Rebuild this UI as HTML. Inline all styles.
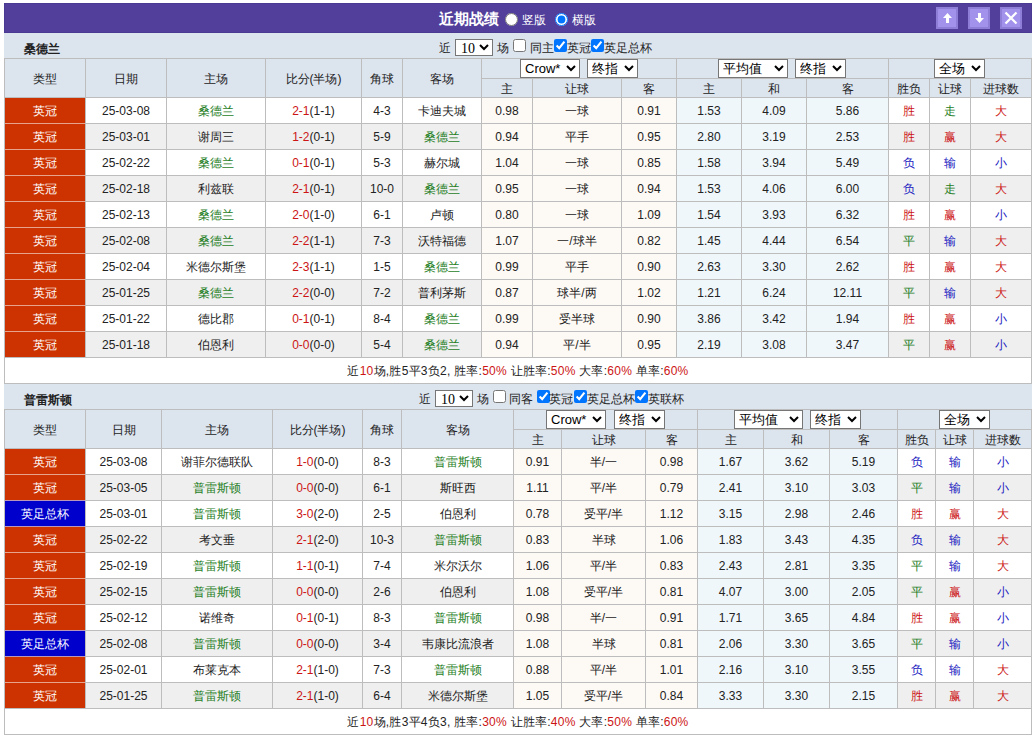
<!DOCTYPE html>
<html><head><meta charset="utf-8"><style>
html,body{margin:0;padding:0;background:#fff;}
body{width:1034px;height:736px;overflow:hidden;position:relative;font-family:"Liberation Sans",sans-serif;font-size:12px;color:#222;}
div,select,input{position:absolute;box-sizing:border-box;}
div{white-space:nowrap;}
select{font-family:"Liberation Sans",sans-serif;font-size:13px;padding:0 0 2px 0;margin:0;background:#fff;border:1px solid #767676;border-radius:0;color:#000;}
select.n{font-family:"Liberation Serif",serif;font-size:14px;padding:0 0 1px 1px;}
input{margin:0;width:13px;height:13px;}
</style></head><body>
<div style="left:4px;top:3px;width:1028px;height:30px;background:#523f9c;border:1px solid #4a3a92"></div><div style="left:439px;top:4px;height:30px;line-height:30px;color:#fff;font-weight:bold;font-size:15px;white-space:nowrap">近期战绩</div><input type="radio" name="v" style="left:505px;top:13px"><div style="left:522px;top:5px;height:30px;line-height:30px;color:#fff;white-space:nowrap">竖版</div><input type="radio" name="v" checked style="left:555px;top:13px"><div style="left:572px;top:5px;height:30px;line-height:30px;color:#fff;white-space:nowrap">横版</div><div style="left:936px;top:7px;width:22px;height:22px;background:#a292ec;border:2px solid #8e7ed8"></div><div style="left:936px;top:7px;width:22px;height:22px"><svg width="22" height="22" viewBox="0 0 22 22"><path d="M11.5 6 L16 11 H13 V16 H10 V11 H7 Z" fill="#fff"/></svg></div><div style="left:968px;top:7px;width:22px;height:22px;background:#a292ec;border:2px solid #8e7ed8"></div><div style="left:968px;top:7px;width:22px;height:22px"><svg width="22" height="22" viewBox="0 0 22 22"><path d="M11.5 16 L16 11 H13 V6 H10 V11 H7 Z" fill="#fff"/></svg></div><div style="left:1000px;top:7px;width:22px;height:22px;background:#a292ec;border:2px solid #8e7ed8"></div><div style="left:1000px;top:7px;width:22px;height:22px"><svg width="22" height="22" viewBox="0 0 22 22"><path d="M5.5 5.5 L16.5 16.5 M16.5 5.5 L5.5 16.5" stroke="#fff" stroke-width="2.3"/></svg></div>
<div style="left:4px;top:33px;width:1028px;height:25px;background:#dce4ee"></div>
<div style="left:24px;top:37px;width:100px;height:25px;line-height:25px;font-weight:bold;color:#222">桑德兰</div>
<div style="left:4px;top:58px;width:1028px;height:39px;background:#dce4ee"></div>
<div style="left:4px;top:98px;width:1028px;height:25px;background:#ffffff"></div>
<div style="left:482px;top:98px;width:195px;height:25px;background:#fdf9f5"></div>
<div style="left:677px;top:98px;width:212px;height:25px;background:#eff7fb"></div>
<div style="left:4px;top:98px;width:82px;height:25px;background:#cc3300"></div>
<div style="left:4px;top:124px;width:1028px;height:25px;background:#efefef"></div>
<div style="left:482px;top:124px;width:195px;height:25px;background:#fdf9f5"></div>
<div style="left:677px;top:124px;width:212px;height:25px;background:#eff7fb"></div>
<div style="left:4px;top:123px;width:82px;height:26px;background:#cc3300"></div>
<div style="left:4px;top:150px;width:1028px;height:25px;background:#ffffff"></div>
<div style="left:482px;top:150px;width:195px;height:25px;background:#fdf9f5"></div>
<div style="left:677px;top:150px;width:212px;height:25px;background:#eff7fb"></div>
<div style="left:4px;top:149px;width:82px;height:26px;background:#cc3300"></div>
<div style="left:4px;top:176px;width:1028px;height:25px;background:#efefef"></div>
<div style="left:482px;top:176px;width:195px;height:25px;background:#fdf9f5"></div>
<div style="left:677px;top:176px;width:212px;height:25px;background:#eff7fb"></div>
<div style="left:4px;top:175px;width:82px;height:26px;background:#cc3300"></div>
<div style="left:4px;top:202px;width:1028px;height:25px;background:#ffffff"></div>
<div style="left:482px;top:202px;width:195px;height:25px;background:#fdf9f5"></div>
<div style="left:677px;top:202px;width:212px;height:25px;background:#eff7fb"></div>
<div style="left:4px;top:201px;width:82px;height:26px;background:#cc3300"></div>
<div style="left:4px;top:228px;width:1028px;height:25px;background:#efefef"></div>
<div style="left:482px;top:228px;width:195px;height:25px;background:#fdf9f5"></div>
<div style="left:677px;top:228px;width:212px;height:25px;background:#eff7fb"></div>
<div style="left:4px;top:227px;width:82px;height:26px;background:#cc3300"></div>
<div style="left:4px;top:254px;width:1028px;height:25px;background:#ffffff"></div>
<div style="left:482px;top:254px;width:195px;height:25px;background:#fdf9f5"></div>
<div style="left:677px;top:254px;width:212px;height:25px;background:#eff7fb"></div>
<div style="left:4px;top:253px;width:82px;height:26px;background:#cc3300"></div>
<div style="left:4px;top:280px;width:1028px;height:25px;background:#efefef"></div>
<div style="left:482px;top:280px;width:195px;height:25px;background:#fdf9f5"></div>
<div style="left:677px;top:280px;width:212px;height:25px;background:#eff7fb"></div>
<div style="left:4px;top:279px;width:82px;height:26px;background:#cc3300"></div>
<div style="left:4px;top:306px;width:1028px;height:25px;background:#ffffff"></div>
<div style="left:482px;top:306px;width:195px;height:25px;background:#fdf9f5"></div>
<div style="left:677px;top:306px;width:212px;height:25px;background:#eff7fb"></div>
<div style="left:4px;top:305px;width:82px;height:26px;background:#cc3300"></div>
<div style="left:4px;top:332px;width:1028px;height:25px;background:#efefef"></div>
<div style="left:482px;top:332px;width:195px;height:25px;background:#fdf9f5"></div>
<div style="left:677px;top:332px;width:212px;height:25px;background:#eff7fb"></div>
<div style="left:4px;top:331px;width:82px;height:26px;background:#cc3300"></div>
<div style="left:4px;top:358px;width:1028px;height:25px;background:#fff"></div>
<div style="left:4px;top:58px;width:1028px;height:1px;background:#bdbdbd"></div>
<div style="left:481px;top:78px;width:551px;height:1px;background:#bdbdbd"></div>
<div style="left:4px;top:97px;width:1028px;height:1px;background:#bdbdbd"></div>
<div style="left:4px;top:123px;width:1028px;height:1px;background:#bdbdbd"></div>
<div style="left:4px;top:149px;width:1028px;height:1px;background:#bdbdbd"></div>
<div style="left:4px;top:175px;width:1028px;height:1px;background:#bdbdbd"></div>
<div style="left:4px;top:201px;width:1028px;height:1px;background:#bdbdbd"></div>
<div style="left:4px;top:227px;width:1028px;height:1px;background:#bdbdbd"></div>
<div style="left:4px;top:253px;width:1028px;height:1px;background:#bdbdbd"></div>
<div style="left:4px;top:279px;width:1028px;height:1px;background:#bdbdbd"></div>
<div style="left:4px;top:305px;width:1028px;height:1px;background:#bdbdbd"></div>
<div style="left:4px;top:331px;width:1028px;height:1px;background:#bdbdbd"></div>
<div style="left:4px;top:357px;width:1028px;height:1px;background:#bdbdbd"></div>
<div style="left:5px;top:123px;width:80px;height:1px;background:#e8a38c"></div>
<div style="left:5px;top:149px;width:80px;height:1px;background:#e8a38c"></div>
<div style="left:5px;top:175px;width:80px;height:1px;background:#e8a38c"></div>
<div style="left:5px;top:201px;width:80px;height:1px;background:#e8a38c"></div>
<div style="left:5px;top:227px;width:80px;height:1px;background:#e8a38c"></div>
<div style="left:5px;top:253px;width:80px;height:1px;background:#e8a38c"></div>
<div style="left:5px;top:279px;width:80px;height:1px;background:#e8a38c"></div>
<div style="left:5px;top:305px;width:80px;height:1px;background:#e8a38c"></div>
<div style="left:5px;top:331px;width:80px;height:1px;background:#e8a38c"></div>
<div style="left:4px;top:383px;width:1028px;height:1px;background:#bdbdbd"></div>
<div style="left:4px;top:58px;width:1px;height:326px;background:#bdbdbd"></div>
<div style="left:85px;top:58px;width:1px;height:300px;background:#bdbdbd"></div>
<div style="left:166px;top:58px;width:1px;height:300px;background:#bdbdbd"></div>
<div style="left:265px;top:58px;width:1px;height:300px;background:#bdbdbd"></div>
<div style="left:361px;top:58px;width:1px;height:300px;background:#bdbdbd"></div>
<div style="left:402px;top:58px;width:1px;height:300px;background:#bdbdbd"></div>
<div style="left:481px;top:58px;width:1px;height:300px;background:#bdbdbd"></div>
<div style="left:532px;top:78px;width:1px;height:280px;background:#bdbdbd"></div>
<div style="left:621px;top:78px;width:1px;height:280px;background:#bdbdbd"></div>
<div style="left:676px;top:58px;width:1px;height:300px;background:#bdbdbd"></div>
<div style="left:741px;top:78px;width:1px;height:280px;background:#bdbdbd"></div>
<div style="left:806px;top:78px;width:1px;height:280px;background:#bdbdbd"></div>
<div style="left:888px;top:58px;width:1px;height:300px;background:#bdbdbd"></div>
<div style="left:929px;top:78px;width:1px;height:280px;background:#bdbdbd"></div>
<div style="left:970px;top:78px;width:1px;height:280px;background:#bdbdbd"></div>
<div style="left:1031px;top:58px;width:1px;height:326px;background:#bdbdbd"></div>
<div style="left:5px;top:60px;width:80px;height:38px;line-height:38px;text-align:center;color:#222;">类型</div>
<div style="left:86px;top:60px;width:80px;height:38px;line-height:38px;text-align:center;color:#222;">日期</div>
<div style="left:167px;top:60px;width:98px;height:38px;line-height:38px;text-align:center;color:#222;">主场</div>
<div style="left:266px;top:60px;width:95px;height:38px;line-height:38px;text-align:center;color:#222;">比分(半场)</div>
<div style="left:362px;top:60px;width:40px;height:38px;line-height:38px;text-align:center;color:#222;">角球</div>
<div style="left:403px;top:60px;width:78px;height:38px;line-height:38px;text-align:center;color:#222;">客场</div>
<div style="left:482px;top:80px;width:50px;height:18px;line-height:18px;text-align:center;color:#222;">主</div>
<div style="left:533px;top:80px;width:88px;height:18px;line-height:18px;text-align:center;color:#222;">让球</div>
<div style="left:622px;top:80px;width:54px;height:18px;line-height:18px;text-align:center;color:#222;">客</div>
<div style="left:677px;top:80px;width:64px;height:18px;line-height:18px;text-align:center;color:#222;">主</div>
<div style="left:742px;top:80px;width:64px;height:18px;line-height:18px;text-align:center;color:#222;">和</div>
<div style="left:807px;top:80px;width:81px;height:18px;line-height:18px;text-align:center;color:#222;">客</div>
<div style="left:889px;top:80px;width:40px;height:18px;line-height:18px;text-align:center;color:#222;">胜负</div>
<div style="left:930px;top:80px;width:40px;height:18px;line-height:18px;text-align:center;color:#222;">让球</div>
<div style="left:971px;top:80px;width:60px;height:18px;line-height:18px;text-align:center;color:#222;">进球数</div>
<select style="left:520px;top:59px;width:60px;height:19px"><option>Crow*</option></select>
<select style="left:587px;top:59px;width:51px;height:19px"><option>终指</option></select>
<select style="left:718px;top:59px;width:70px;height:19px"><option>平均值</option></select>
<select style="left:795px;top:59px;width:51px;height:19px"><option>终指</option></select>
<select style="left:934px;top:59px;width:51px;height:19px"><option>全场</option></select>
<div style="left:5px;top:99px;width:80px;height:25px;line-height:25px;text-align:center;color:#fff;">英冠</div>
<div style="left:86px;top:99px;width:80px;height:25px;line-height:25px;text-align:center;color:#222;">25-03-08</div>
<div style="left:167px;top:99px;width:98px;height:25px;line-height:25px;text-align:center;color:#1e7e1e;">桑德兰</div>
<div style="left:266px;top:99px;width:95px;height:25px;line-height:25px;text-align:center;color:#222;"><span style="color:#cc1414">2-1</span>(1-1)</div>
<div style="left:362px;top:99px;width:40px;height:25px;line-height:25px;text-align:center;color:#222;">4-3</div>
<div style="left:403px;top:99px;width:78px;height:25px;line-height:25px;text-align:center;color:#222;">卡迪夫城</div>
<div style="left:482px;top:99px;width:50px;height:25px;line-height:25px;text-align:center;color:#222;">0.98</div>
<div style="left:533px;top:99px;width:88px;height:25px;line-height:25px;text-align:center;color:#222;">一球</div>
<div style="left:622px;top:99px;width:54px;height:25px;line-height:25px;text-align:center;color:#222;">0.91</div>
<div style="left:677px;top:99px;width:64px;height:25px;line-height:25px;text-align:center;color:#222;">1.53</div>
<div style="left:742px;top:99px;width:64px;height:25px;line-height:25px;text-align:center;color:#222;">4.09</div>
<div style="left:807px;top:99px;width:81px;height:25px;line-height:25px;text-align:center;color:#222;">5.86</div>
<div style="left:889px;top:99px;width:40px;height:25px;line-height:25px;text-align:center;color:#cc1414;">胜</div>
<div style="left:930px;top:99px;width:40px;height:25px;line-height:25px;text-align:center;color:#1e7e1e;">走</div>
<div style="left:971px;top:99px;width:60px;height:25px;line-height:25px;text-align:center;color:#cc1414;">大</div>
<div style="left:5px;top:125px;width:80px;height:25px;line-height:25px;text-align:center;color:#fff;">英冠</div>
<div style="left:86px;top:125px;width:80px;height:25px;line-height:25px;text-align:center;color:#222;">25-03-01</div>
<div style="left:167px;top:125px;width:98px;height:25px;line-height:25px;text-align:center;color:#222;">谢周三</div>
<div style="left:266px;top:125px;width:95px;height:25px;line-height:25px;text-align:center;color:#222;"><span style="color:#cc1414">1-2</span>(0-1)</div>
<div style="left:362px;top:125px;width:40px;height:25px;line-height:25px;text-align:center;color:#222;">5-9</div>
<div style="left:403px;top:125px;width:78px;height:25px;line-height:25px;text-align:center;color:#1e7e1e;">桑德兰</div>
<div style="left:482px;top:125px;width:50px;height:25px;line-height:25px;text-align:center;color:#222;">0.94</div>
<div style="left:533px;top:125px;width:88px;height:25px;line-height:25px;text-align:center;color:#222;">平手</div>
<div style="left:622px;top:125px;width:54px;height:25px;line-height:25px;text-align:center;color:#222;">0.95</div>
<div style="left:677px;top:125px;width:64px;height:25px;line-height:25px;text-align:center;color:#222;">2.80</div>
<div style="left:742px;top:125px;width:64px;height:25px;line-height:25px;text-align:center;color:#222;">3.19</div>
<div style="left:807px;top:125px;width:81px;height:25px;line-height:25px;text-align:center;color:#222;">2.53</div>
<div style="left:889px;top:125px;width:40px;height:25px;line-height:25px;text-align:center;color:#cc1414;">胜</div>
<div style="left:930px;top:125px;width:40px;height:25px;line-height:25px;text-align:center;color:#cc1414;">赢</div>
<div style="left:971px;top:125px;width:60px;height:25px;line-height:25px;text-align:center;color:#cc1414;">大</div>
<div style="left:5px;top:151px;width:80px;height:25px;line-height:25px;text-align:center;color:#fff;">英冠</div>
<div style="left:86px;top:151px;width:80px;height:25px;line-height:25px;text-align:center;color:#222;">25-02-22</div>
<div style="left:167px;top:151px;width:98px;height:25px;line-height:25px;text-align:center;color:#1e7e1e;">桑德兰</div>
<div style="left:266px;top:151px;width:95px;height:25px;line-height:25px;text-align:center;color:#222;"><span style="color:#cc1414">0-1</span>(0-1)</div>
<div style="left:362px;top:151px;width:40px;height:25px;line-height:25px;text-align:center;color:#222;">5-3</div>
<div style="left:403px;top:151px;width:78px;height:25px;line-height:25px;text-align:center;color:#222;">赫尔城</div>
<div style="left:482px;top:151px;width:50px;height:25px;line-height:25px;text-align:center;color:#222;">1.04</div>
<div style="left:533px;top:151px;width:88px;height:25px;line-height:25px;text-align:center;color:#222;">一球</div>
<div style="left:622px;top:151px;width:54px;height:25px;line-height:25px;text-align:center;color:#222;">0.85</div>
<div style="left:677px;top:151px;width:64px;height:25px;line-height:25px;text-align:center;color:#222;">1.58</div>
<div style="left:742px;top:151px;width:64px;height:25px;line-height:25px;text-align:center;color:#222;">3.94</div>
<div style="left:807px;top:151px;width:81px;height:25px;line-height:25px;text-align:center;color:#222;">5.49</div>
<div style="left:889px;top:151px;width:40px;height:25px;line-height:25px;text-align:center;color:#1818c0;">负</div>
<div style="left:930px;top:151px;width:40px;height:25px;line-height:25px;text-align:center;color:#1818c0;">输</div>
<div style="left:971px;top:151px;width:60px;height:25px;line-height:25px;text-align:center;color:#1818c0;">小</div>
<div style="left:5px;top:177px;width:80px;height:25px;line-height:25px;text-align:center;color:#fff;">英冠</div>
<div style="left:86px;top:177px;width:80px;height:25px;line-height:25px;text-align:center;color:#222;">25-02-18</div>
<div style="left:167px;top:177px;width:98px;height:25px;line-height:25px;text-align:center;color:#222;">利兹联</div>
<div style="left:266px;top:177px;width:95px;height:25px;line-height:25px;text-align:center;color:#222;"><span style="color:#cc1414">2-1</span>(0-1)</div>
<div style="left:362px;top:177px;width:40px;height:25px;line-height:25px;text-align:center;color:#222;">10-0</div>
<div style="left:403px;top:177px;width:78px;height:25px;line-height:25px;text-align:center;color:#1e7e1e;">桑德兰</div>
<div style="left:482px;top:177px;width:50px;height:25px;line-height:25px;text-align:center;color:#222;">0.95</div>
<div style="left:533px;top:177px;width:88px;height:25px;line-height:25px;text-align:center;color:#222;">一球</div>
<div style="left:622px;top:177px;width:54px;height:25px;line-height:25px;text-align:center;color:#222;">0.94</div>
<div style="left:677px;top:177px;width:64px;height:25px;line-height:25px;text-align:center;color:#222;">1.53</div>
<div style="left:742px;top:177px;width:64px;height:25px;line-height:25px;text-align:center;color:#222;">4.06</div>
<div style="left:807px;top:177px;width:81px;height:25px;line-height:25px;text-align:center;color:#222;">6.00</div>
<div style="left:889px;top:177px;width:40px;height:25px;line-height:25px;text-align:center;color:#1818c0;">负</div>
<div style="left:930px;top:177px;width:40px;height:25px;line-height:25px;text-align:center;color:#1e7e1e;">走</div>
<div style="left:971px;top:177px;width:60px;height:25px;line-height:25px;text-align:center;color:#cc1414;">大</div>
<div style="left:5px;top:203px;width:80px;height:25px;line-height:25px;text-align:center;color:#fff;">英冠</div>
<div style="left:86px;top:203px;width:80px;height:25px;line-height:25px;text-align:center;color:#222;">25-02-13</div>
<div style="left:167px;top:203px;width:98px;height:25px;line-height:25px;text-align:center;color:#1e7e1e;">桑德兰</div>
<div style="left:266px;top:203px;width:95px;height:25px;line-height:25px;text-align:center;color:#222;"><span style="color:#cc1414">2-0</span>(1-0)</div>
<div style="left:362px;top:203px;width:40px;height:25px;line-height:25px;text-align:center;color:#222;">6-1</div>
<div style="left:403px;top:203px;width:78px;height:25px;line-height:25px;text-align:center;color:#222;">卢顿</div>
<div style="left:482px;top:203px;width:50px;height:25px;line-height:25px;text-align:center;color:#222;">0.80</div>
<div style="left:533px;top:203px;width:88px;height:25px;line-height:25px;text-align:center;color:#222;">一球</div>
<div style="left:622px;top:203px;width:54px;height:25px;line-height:25px;text-align:center;color:#222;">1.09</div>
<div style="left:677px;top:203px;width:64px;height:25px;line-height:25px;text-align:center;color:#222;">1.54</div>
<div style="left:742px;top:203px;width:64px;height:25px;line-height:25px;text-align:center;color:#222;">3.93</div>
<div style="left:807px;top:203px;width:81px;height:25px;line-height:25px;text-align:center;color:#222;">6.32</div>
<div style="left:889px;top:203px;width:40px;height:25px;line-height:25px;text-align:center;color:#cc1414;">胜</div>
<div style="left:930px;top:203px;width:40px;height:25px;line-height:25px;text-align:center;color:#cc1414;">赢</div>
<div style="left:971px;top:203px;width:60px;height:25px;line-height:25px;text-align:center;color:#1818c0;">小</div>
<div style="left:5px;top:229px;width:80px;height:25px;line-height:25px;text-align:center;color:#fff;">英冠</div>
<div style="left:86px;top:229px;width:80px;height:25px;line-height:25px;text-align:center;color:#222;">25-02-08</div>
<div style="left:167px;top:229px;width:98px;height:25px;line-height:25px;text-align:center;color:#1e7e1e;">桑德兰</div>
<div style="left:266px;top:229px;width:95px;height:25px;line-height:25px;text-align:center;color:#222;"><span style="color:#cc1414">2-2</span>(1-1)</div>
<div style="left:362px;top:229px;width:40px;height:25px;line-height:25px;text-align:center;color:#222;">7-3</div>
<div style="left:403px;top:229px;width:78px;height:25px;line-height:25px;text-align:center;color:#222;">沃特福德</div>
<div style="left:482px;top:229px;width:50px;height:25px;line-height:25px;text-align:center;color:#222;">1.07</div>
<div style="left:533px;top:229px;width:88px;height:25px;line-height:25px;text-align:center;color:#222;">一/球半</div>
<div style="left:622px;top:229px;width:54px;height:25px;line-height:25px;text-align:center;color:#222;">0.82</div>
<div style="left:677px;top:229px;width:64px;height:25px;line-height:25px;text-align:center;color:#222;">1.45</div>
<div style="left:742px;top:229px;width:64px;height:25px;line-height:25px;text-align:center;color:#222;">4.44</div>
<div style="left:807px;top:229px;width:81px;height:25px;line-height:25px;text-align:center;color:#222;">6.54</div>
<div style="left:889px;top:229px;width:40px;height:25px;line-height:25px;text-align:center;color:#1e7e1e;">平</div>
<div style="left:930px;top:229px;width:40px;height:25px;line-height:25px;text-align:center;color:#1818c0;">输</div>
<div style="left:971px;top:229px;width:60px;height:25px;line-height:25px;text-align:center;color:#cc1414;">大</div>
<div style="left:5px;top:255px;width:80px;height:25px;line-height:25px;text-align:center;color:#fff;">英冠</div>
<div style="left:86px;top:255px;width:80px;height:25px;line-height:25px;text-align:center;color:#222;">25-02-04</div>
<div style="left:167px;top:255px;width:98px;height:25px;line-height:25px;text-align:center;color:#222;">米德尔斯堡</div>
<div style="left:266px;top:255px;width:95px;height:25px;line-height:25px;text-align:center;color:#222;"><span style="color:#cc1414">2-3</span>(1-1)</div>
<div style="left:362px;top:255px;width:40px;height:25px;line-height:25px;text-align:center;color:#222;">1-5</div>
<div style="left:403px;top:255px;width:78px;height:25px;line-height:25px;text-align:center;color:#1e7e1e;">桑德兰</div>
<div style="left:482px;top:255px;width:50px;height:25px;line-height:25px;text-align:center;color:#222;">0.99</div>
<div style="left:533px;top:255px;width:88px;height:25px;line-height:25px;text-align:center;color:#222;">平手</div>
<div style="left:622px;top:255px;width:54px;height:25px;line-height:25px;text-align:center;color:#222;">0.90</div>
<div style="left:677px;top:255px;width:64px;height:25px;line-height:25px;text-align:center;color:#222;">2.63</div>
<div style="left:742px;top:255px;width:64px;height:25px;line-height:25px;text-align:center;color:#222;">3.30</div>
<div style="left:807px;top:255px;width:81px;height:25px;line-height:25px;text-align:center;color:#222;">2.62</div>
<div style="left:889px;top:255px;width:40px;height:25px;line-height:25px;text-align:center;color:#cc1414;">胜</div>
<div style="left:930px;top:255px;width:40px;height:25px;line-height:25px;text-align:center;color:#cc1414;">赢</div>
<div style="left:971px;top:255px;width:60px;height:25px;line-height:25px;text-align:center;color:#cc1414;">大</div>
<div style="left:5px;top:281px;width:80px;height:25px;line-height:25px;text-align:center;color:#fff;">英冠</div>
<div style="left:86px;top:281px;width:80px;height:25px;line-height:25px;text-align:center;color:#222;">25-01-25</div>
<div style="left:167px;top:281px;width:98px;height:25px;line-height:25px;text-align:center;color:#1e7e1e;">桑德兰</div>
<div style="left:266px;top:281px;width:95px;height:25px;line-height:25px;text-align:center;color:#222;"><span style="color:#cc1414">2-2</span>(0-0)</div>
<div style="left:362px;top:281px;width:40px;height:25px;line-height:25px;text-align:center;color:#222;">7-2</div>
<div style="left:403px;top:281px;width:78px;height:25px;line-height:25px;text-align:center;color:#222;">普利茅斯</div>
<div style="left:482px;top:281px;width:50px;height:25px;line-height:25px;text-align:center;color:#222;">0.87</div>
<div style="left:533px;top:281px;width:88px;height:25px;line-height:25px;text-align:center;color:#222;">球半/两</div>
<div style="left:622px;top:281px;width:54px;height:25px;line-height:25px;text-align:center;color:#222;">1.02</div>
<div style="left:677px;top:281px;width:64px;height:25px;line-height:25px;text-align:center;color:#222;">1.21</div>
<div style="left:742px;top:281px;width:64px;height:25px;line-height:25px;text-align:center;color:#222;">6.24</div>
<div style="left:807px;top:281px;width:81px;height:25px;line-height:25px;text-align:center;color:#222;">12.11</div>
<div style="left:889px;top:281px;width:40px;height:25px;line-height:25px;text-align:center;color:#1e7e1e;">平</div>
<div style="left:930px;top:281px;width:40px;height:25px;line-height:25px;text-align:center;color:#1818c0;">输</div>
<div style="left:971px;top:281px;width:60px;height:25px;line-height:25px;text-align:center;color:#cc1414;">大</div>
<div style="left:5px;top:307px;width:80px;height:25px;line-height:25px;text-align:center;color:#fff;">英冠</div>
<div style="left:86px;top:307px;width:80px;height:25px;line-height:25px;text-align:center;color:#222;">25-01-22</div>
<div style="left:167px;top:307px;width:98px;height:25px;line-height:25px;text-align:center;color:#222;">德比郡</div>
<div style="left:266px;top:307px;width:95px;height:25px;line-height:25px;text-align:center;color:#222;"><span style="color:#cc1414">0-1</span>(0-1)</div>
<div style="left:362px;top:307px;width:40px;height:25px;line-height:25px;text-align:center;color:#222;">8-4</div>
<div style="left:403px;top:307px;width:78px;height:25px;line-height:25px;text-align:center;color:#1e7e1e;">桑德兰</div>
<div style="left:482px;top:307px;width:50px;height:25px;line-height:25px;text-align:center;color:#222;">0.99</div>
<div style="left:533px;top:307px;width:88px;height:25px;line-height:25px;text-align:center;color:#222;">受半球</div>
<div style="left:622px;top:307px;width:54px;height:25px;line-height:25px;text-align:center;color:#222;">0.90</div>
<div style="left:677px;top:307px;width:64px;height:25px;line-height:25px;text-align:center;color:#222;">3.86</div>
<div style="left:742px;top:307px;width:64px;height:25px;line-height:25px;text-align:center;color:#222;">3.42</div>
<div style="left:807px;top:307px;width:81px;height:25px;line-height:25px;text-align:center;color:#222;">1.94</div>
<div style="left:889px;top:307px;width:40px;height:25px;line-height:25px;text-align:center;color:#cc1414;">胜</div>
<div style="left:930px;top:307px;width:40px;height:25px;line-height:25px;text-align:center;color:#cc1414;">赢</div>
<div style="left:971px;top:307px;width:60px;height:25px;line-height:25px;text-align:center;color:#1818c0;">小</div>
<div style="left:5px;top:333px;width:80px;height:25px;line-height:25px;text-align:center;color:#fff;">英冠</div>
<div style="left:86px;top:333px;width:80px;height:25px;line-height:25px;text-align:center;color:#222;">25-01-18</div>
<div style="left:167px;top:333px;width:98px;height:25px;line-height:25px;text-align:center;color:#222;">伯恩利</div>
<div style="left:266px;top:333px;width:95px;height:25px;line-height:25px;text-align:center;color:#222;"><span style="color:#cc1414">0-0</span>(0-0)</div>
<div style="left:362px;top:333px;width:40px;height:25px;line-height:25px;text-align:center;color:#222;">5-4</div>
<div style="left:403px;top:333px;width:78px;height:25px;line-height:25px;text-align:center;color:#1e7e1e;">桑德兰</div>
<div style="left:482px;top:333px;width:50px;height:25px;line-height:25px;text-align:center;color:#222;">0.94</div>
<div style="left:533px;top:333px;width:88px;height:25px;line-height:25px;text-align:center;color:#222;">平/半</div>
<div style="left:622px;top:333px;width:54px;height:25px;line-height:25px;text-align:center;color:#222;">0.95</div>
<div style="left:677px;top:333px;width:64px;height:25px;line-height:25px;text-align:center;color:#222;">2.19</div>
<div style="left:742px;top:333px;width:64px;height:25px;line-height:25px;text-align:center;color:#222;">3.08</div>
<div style="left:807px;top:333px;width:81px;height:25px;line-height:25px;text-align:center;color:#222;">3.47</div>
<div style="left:889px;top:333px;width:40px;height:25px;line-height:25px;text-align:center;color:#1e7e1e;">平</div>
<div style="left:930px;top:333px;width:40px;height:25px;line-height:25px;text-align:center;color:#cc1414;">赢</div>
<div style="left:971px;top:333px;width:60px;height:25px;line-height:25px;text-align:center;color:#1818c0;">小</div>
<div style="left:5px;top:359px;width:1026px;height:25px;line-height:25px;text-align:center;color:#222;letter-spacing:0.25px">近<span style="color:#cc1414">10</span>场,胜5平3负2, 胜率:<span style="color:#cc1414">50%</span> 让胜率:<span style="color:#cc1414">50%</span> 大率:<span style="color:#cc1414">60%</span> 单率:<span style="color:#cc1414">60%</span></div>
<div style="left:4px;top:384px;width:1028px;height:25px;background:#dce4ee"></div>
<div style="left:24px;top:388px;width:100px;height:25px;line-height:25px;font-weight:bold;color:#222">普雷斯顿</div>
<div style="left:4px;top:409px;width:1028px;height:39px;background:#dce4ee"></div>
<div style="left:4px;top:449px;width:1028px;height:25px;background:#ffffff"></div>
<div style="left:514px;top:449px;width:184px;height:25px;background:#fdf9f5"></div>
<div style="left:698px;top:449px;width:200px;height:25px;background:#eff7fb"></div>
<div style="left:4px;top:449px;width:82px;height:25px;background:#cc3300"></div>
<div style="left:4px;top:475px;width:1028px;height:25px;background:#efefef"></div>
<div style="left:514px;top:475px;width:184px;height:25px;background:#fdf9f5"></div>
<div style="left:698px;top:475px;width:200px;height:25px;background:#eff7fb"></div>
<div style="left:4px;top:474px;width:82px;height:26px;background:#cc3300"></div>
<div style="left:4px;top:501px;width:1028px;height:25px;background:#ffffff"></div>
<div style="left:514px;top:501px;width:184px;height:25px;background:#fdf9f5"></div>
<div style="left:698px;top:501px;width:200px;height:25px;background:#eff7fb"></div>
<div style="left:4px;top:500px;width:82px;height:26px;background:#0000cc"></div>
<div style="left:4px;top:527px;width:1028px;height:25px;background:#efefef"></div>
<div style="left:514px;top:527px;width:184px;height:25px;background:#fdf9f5"></div>
<div style="left:698px;top:527px;width:200px;height:25px;background:#eff7fb"></div>
<div style="left:4px;top:526px;width:82px;height:26px;background:#cc3300"></div>
<div style="left:4px;top:553px;width:1028px;height:25px;background:#ffffff"></div>
<div style="left:514px;top:553px;width:184px;height:25px;background:#fdf9f5"></div>
<div style="left:698px;top:553px;width:200px;height:25px;background:#eff7fb"></div>
<div style="left:4px;top:552px;width:82px;height:26px;background:#cc3300"></div>
<div style="left:4px;top:579px;width:1028px;height:25px;background:#efefef"></div>
<div style="left:514px;top:579px;width:184px;height:25px;background:#fdf9f5"></div>
<div style="left:698px;top:579px;width:200px;height:25px;background:#eff7fb"></div>
<div style="left:4px;top:578px;width:82px;height:26px;background:#cc3300"></div>
<div style="left:4px;top:605px;width:1028px;height:25px;background:#ffffff"></div>
<div style="left:514px;top:605px;width:184px;height:25px;background:#fdf9f5"></div>
<div style="left:698px;top:605px;width:200px;height:25px;background:#eff7fb"></div>
<div style="left:4px;top:604px;width:82px;height:26px;background:#cc3300"></div>
<div style="left:4px;top:631px;width:1028px;height:25px;background:#efefef"></div>
<div style="left:514px;top:631px;width:184px;height:25px;background:#fdf9f5"></div>
<div style="left:698px;top:631px;width:200px;height:25px;background:#eff7fb"></div>
<div style="left:4px;top:630px;width:82px;height:26px;background:#0000cc"></div>
<div style="left:4px;top:657px;width:1028px;height:25px;background:#ffffff"></div>
<div style="left:514px;top:657px;width:184px;height:25px;background:#fdf9f5"></div>
<div style="left:698px;top:657px;width:200px;height:25px;background:#eff7fb"></div>
<div style="left:4px;top:656px;width:82px;height:26px;background:#cc3300"></div>
<div style="left:4px;top:683px;width:1028px;height:25px;background:#efefef"></div>
<div style="left:514px;top:683px;width:184px;height:25px;background:#fdf9f5"></div>
<div style="left:698px;top:683px;width:200px;height:25px;background:#eff7fb"></div>
<div style="left:4px;top:682px;width:82px;height:26px;background:#cc3300"></div>
<div style="left:4px;top:709px;width:1028px;height:25px;background:#fff"></div>
<div style="left:4px;top:409px;width:1028px;height:1px;background:#bdbdbd"></div>
<div style="left:513px;top:429px;width:519px;height:1px;background:#bdbdbd"></div>
<div style="left:4px;top:448px;width:1028px;height:1px;background:#bdbdbd"></div>
<div style="left:4px;top:474px;width:1028px;height:1px;background:#bdbdbd"></div>
<div style="left:4px;top:500px;width:1028px;height:1px;background:#bdbdbd"></div>
<div style="left:4px;top:526px;width:1028px;height:1px;background:#bdbdbd"></div>
<div style="left:4px;top:552px;width:1028px;height:1px;background:#bdbdbd"></div>
<div style="left:4px;top:578px;width:1028px;height:1px;background:#bdbdbd"></div>
<div style="left:4px;top:604px;width:1028px;height:1px;background:#bdbdbd"></div>
<div style="left:4px;top:630px;width:1028px;height:1px;background:#bdbdbd"></div>
<div style="left:4px;top:656px;width:1028px;height:1px;background:#bdbdbd"></div>
<div style="left:4px;top:682px;width:1028px;height:1px;background:#bdbdbd"></div>
<div style="left:4px;top:708px;width:1028px;height:1px;background:#bdbdbd"></div>
<div style="left:5px;top:474px;width:80px;height:1px;background:#e8a38c"></div>
<div style="left:5px;top:500px;width:80px;height:1px;background:#ba97ba"></div>
<div style="left:5px;top:526px;width:80px;height:1px;background:#ba97ba"></div>
<div style="left:5px;top:552px;width:80px;height:1px;background:#e8a38c"></div>
<div style="left:5px;top:578px;width:80px;height:1px;background:#e8a38c"></div>
<div style="left:5px;top:604px;width:80px;height:1px;background:#e8a38c"></div>
<div style="left:5px;top:630px;width:80px;height:1px;background:#ba97ba"></div>
<div style="left:5px;top:656px;width:80px;height:1px;background:#ba97ba"></div>
<div style="left:5px;top:682px;width:80px;height:1px;background:#e8a38c"></div>
<div style="left:4px;top:734px;width:1028px;height:1px;background:#bdbdbd"></div>
<div style="left:4px;top:409px;width:1px;height:326px;background:#bdbdbd"></div>
<div style="left:85px;top:409px;width:1px;height:300px;background:#bdbdbd"></div>
<div style="left:161px;top:409px;width:1px;height:300px;background:#bdbdbd"></div>
<div style="left:272px;top:409px;width:1px;height:300px;background:#bdbdbd"></div>
<div style="left:362px;top:409px;width:1px;height:300px;background:#bdbdbd"></div>
<div style="left:401px;top:409px;width:1px;height:300px;background:#bdbdbd"></div>
<div style="left:513px;top:409px;width:1px;height:300px;background:#bdbdbd"></div>
<div style="left:561px;top:429px;width:1px;height:280px;background:#bdbdbd"></div>
<div style="left:645px;top:429px;width:1px;height:280px;background:#bdbdbd"></div>
<div style="left:697px;top:409px;width:1px;height:300px;background:#bdbdbd"></div>
<div style="left:763px;top:429px;width:1px;height:280px;background:#bdbdbd"></div>
<div style="left:829px;top:429px;width:1px;height:280px;background:#bdbdbd"></div>
<div style="left:897px;top:409px;width:1px;height:300px;background:#bdbdbd"></div>
<div style="left:935px;top:429px;width:1px;height:280px;background:#bdbdbd"></div>
<div style="left:973px;top:429px;width:1px;height:280px;background:#bdbdbd"></div>
<div style="left:1031px;top:409px;width:1px;height:326px;background:#bdbdbd"></div>
<div style="left:5px;top:411px;width:80px;height:38px;line-height:38px;text-align:center;color:#222;">类型</div>
<div style="left:86px;top:411px;width:75px;height:38px;line-height:38px;text-align:center;color:#222;">日期</div>
<div style="left:162px;top:411px;width:110px;height:38px;line-height:38px;text-align:center;color:#222;">主场</div>
<div style="left:273px;top:411px;width:89px;height:38px;line-height:38px;text-align:center;color:#222;">比分(半场)</div>
<div style="left:363px;top:411px;width:38px;height:38px;line-height:38px;text-align:center;color:#222;">角球</div>
<div style="left:402px;top:411px;width:111px;height:38px;line-height:38px;text-align:center;color:#222;">客场</div>
<div style="left:514px;top:431px;width:47px;height:18px;line-height:18px;text-align:center;color:#222;">主</div>
<div style="left:562px;top:431px;width:83px;height:18px;line-height:18px;text-align:center;color:#222;">让球</div>
<div style="left:646px;top:431px;width:51px;height:18px;line-height:18px;text-align:center;color:#222;">客</div>
<div style="left:698px;top:431px;width:65px;height:18px;line-height:18px;text-align:center;color:#222;">主</div>
<div style="left:764px;top:431px;width:65px;height:18px;line-height:18px;text-align:center;color:#222;">和</div>
<div style="left:830px;top:431px;width:67px;height:18px;line-height:18px;text-align:center;color:#222;">客</div>
<div style="left:898px;top:431px;width:37px;height:18px;line-height:18px;text-align:center;color:#222;">胜负</div>
<div style="left:936px;top:431px;width:37px;height:18px;line-height:18px;text-align:center;color:#222;">让球</div>
<div style="left:974px;top:431px;width:57px;height:18px;line-height:18px;text-align:center;color:#222;">进球数</div>
<select style="left:546px;top:410px;width:60px;height:19px"><option>Crow*</option></select>
<select style="left:614px;top:410px;width:51px;height:19px"><option>终指</option></select>
<select style="left:734px;top:410px;width:69px;height:19px"><option>平均值</option></select>
<select style="left:810px;top:410px;width:51px;height:19px"><option>终指</option></select>
<select style="left:939px;top:410px;width:51px;height:19px"><option>全场</option></select>
<div style="left:5px;top:450px;width:80px;height:25px;line-height:25px;text-align:center;color:#fff;">英冠</div>
<div style="left:86px;top:450px;width:75px;height:25px;line-height:25px;text-align:center;color:#222;">25-03-08</div>
<div style="left:162px;top:450px;width:110px;height:25px;line-height:25px;text-align:center;color:#222;">谢菲尔德联队</div>
<div style="left:273px;top:450px;width:89px;height:25px;line-height:25px;text-align:center;color:#222;"><span style="color:#cc1414">1-0</span>(0-0)</div>
<div style="left:363px;top:450px;width:38px;height:25px;line-height:25px;text-align:center;color:#222;">8-3</div>
<div style="left:402px;top:450px;width:111px;height:25px;line-height:25px;text-align:center;color:#1e7e1e;">普雷斯顿</div>
<div style="left:514px;top:450px;width:47px;height:25px;line-height:25px;text-align:center;color:#222;">0.91</div>
<div style="left:562px;top:450px;width:83px;height:25px;line-height:25px;text-align:center;color:#222;">半/一</div>
<div style="left:646px;top:450px;width:51px;height:25px;line-height:25px;text-align:center;color:#222;">0.98</div>
<div style="left:698px;top:450px;width:65px;height:25px;line-height:25px;text-align:center;color:#222;">1.67</div>
<div style="left:764px;top:450px;width:65px;height:25px;line-height:25px;text-align:center;color:#222;">3.62</div>
<div style="left:830px;top:450px;width:67px;height:25px;line-height:25px;text-align:center;color:#222;">5.19</div>
<div style="left:898px;top:450px;width:37px;height:25px;line-height:25px;text-align:center;color:#1818c0;">负</div>
<div style="left:936px;top:450px;width:37px;height:25px;line-height:25px;text-align:center;color:#1818c0;">输</div>
<div style="left:974px;top:450px;width:57px;height:25px;line-height:25px;text-align:center;color:#1818c0;">小</div>
<div style="left:5px;top:476px;width:80px;height:25px;line-height:25px;text-align:center;color:#fff;">英冠</div>
<div style="left:86px;top:476px;width:75px;height:25px;line-height:25px;text-align:center;color:#222;">25-03-05</div>
<div style="left:162px;top:476px;width:110px;height:25px;line-height:25px;text-align:center;color:#1e7e1e;">普雷斯顿</div>
<div style="left:273px;top:476px;width:89px;height:25px;line-height:25px;text-align:center;color:#222;"><span style="color:#cc1414">0-0</span>(0-0)</div>
<div style="left:363px;top:476px;width:38px;height:25px;line-height:25px;text-align:center;color:#222;">6-1</div>
<div style="left:402px;top:476px;width:111px;height:25px;line-height:25px;text-align:center;color:#222;">斯旺西</div>
<div style="left:514px;top:476px;width:47px;height:25px;line-height:25px;text-align:center;color:#222;">1.11</div>
<div style="left:562px;top:476px;width:83px;height:25px;line-height:25px;text-align:center;color:#222;">平/半</div>
<div style="left:646px;top:476px;width:51px;height:25px;line-height:25px;text-align:center;color:#222;">0.79</div>
<div style="left:698px;top:476px;width:65px;height:25px;line-height:25px;text-align:center;color:#222;">2.41</div>
<div style="left:764px;top:476px;width:65px;height:25px;line-height:25px;text-align:center;color:#222;">3.10</div>
<div style="left:830px;top:476px;width:67px;height:25px;line-height:25px;text-align:center;color:#222;">3.03</div>
<div style="left:898px;top:476px;width:37px;height:25px;line-height:25px;text-align:center;color:#1e7e1e;">平</div>
<div style="left:936px;top:476px;width:37px;height:25px;line-height:25px;text-align:center;color:#1818c0;">输</div>
<div style="left:974px;top:476px;width:57px;height:25px;line-height:25px;text-align:center;color:#1818c0;">小</div>
<div style="left:5px;top:502px;width:80px;height:25px;line-height:25px;text-align:center;color:#fff;">英足总杯</div>
<div style="left:86px;top:502px;width:75px;height:25px;line-height:25px;text-align:center;color:#222;">25-03-01</div>
<div style="left:162px;top:502px;width:110px;height:25px;line-height:25px;text-align:center;color:#1e7e1e;">普雷斯顿</div>
<div style="left:273px;top:502px;width:89px;height:25px;line-height:25px;text-align:center;color:#222;"><span style="color:#cc1414">3-0</span>(2-0)</div>
<div style="left:363px;top:502px;width:38px;height:25px;line-height:25px;text-align:center;color:#222;">2-5</div>
<div style="left:402px;top:502px;width:111px;height:25px;line-height:25px;text-align:center;color:#222;">伯恩利</div>
<div style="left:514px;top:502px;width:47px;height:25px;line-height:25px;text-align:center;color:#222;">0.78</div>
<div style="left:562px;top:502px;width:83px;height:25px;line-height:25px;text-align:center;color:#222;">受平/半</div>
<div style="left:646px;top:502px;width:51px;height:25px;line-height:25px;text-align:center;color:#222;">1.12</div>
<div style="left:698px;top:502px;width:65px;height:25px;line-height:25px;text-align:center;color:#222;">3.15</div>
<div style="left:764px;top:502px;width:65px;height:25px;line-height:25px;text-align:center;color:#222;">2.98</div>
<div style="left:830px;top:502px;width:67px;height:25px;line-height:25px;text-align:center;color:#222;">2.46</div>
<div style="left:898px;top:502px;width:37px;height:25px;line-height:25px;text-align:center;color:#cc1414;">胜</div>
<div style="left:936px;top:502px;width:37px;height:25px;line-height:25px;text-align:center;color:#cc1414;">赢</div>
<div style="left:974px;top:502px;width:57px;height:25px;line-height:25px;text-align:center;color:#cc1414;">大</div>
<div style="left:5px;top:528px;width:80px;height:25px;line-height:25px;text-align:center;color:#fff;">英冠</div>
<div style="left:86px;top:528px;width:75px;height:25px;line-height:25px;text-align:center;color:#222;">25-02-22</div>
<div style="left:162px;top:528px;width:110px;height:25px;line-height:25px;text-align:center;color:#222;">考文垂</div>
<div style="left:273px;top:528px;width:89px;height:25px;line-height:25px;text-align:center;color:#222;"><span style="color:#cc1414">2-1</span>(2-0)</div>
<div style="left:363px;top:528px;width:38px;height:25px;line-height:25px;text-align:center;color:#222;">10-3</div>
<div style="left:402px;top:528px;width:111px;height:25px;line-height:25px;text-align:center;color:#1e7e1e;">普雷斯顿</div>
<div style="left:514px;top:528px;width:47px;height:25px;line-height:25px;text-align:center;color:#222;">0.83</div>
<div style="left:562px;top:528px;width:83px;height:25px;line-height:25px;text-align:center;color:#222;">半球</div>
<div style="left:646px;top:528px;width:51px;height:25px;line-height:25px;text-align:center;color:#222;">1.06</div>
<div style="left:698px;top:528px;width:65px;height:25px;line-height:25px;text-align:center;color:#222;">1.83</div>
<div style="left:764px;top:528px;width:65px;height:25px;line-height:25px;text-align:center;color:#222;">3.43</div>
<div style="left:830px;top:528px;width:67px;height:25px;line-height:25px;text-align:center;color:#222;">4.35</div>
<div style="left:898px;top:528px;width:37px;height:25px;line-height:25px;text-align:center;color:#1818c0;">负</div>
<div style="left:936px;top:528px;width:37px;height:25px;line-height:25px;text-align:center;color:#1818c0;">输</div>
<div style="left:974px;top:528px;width:57px;height:25px;line-height:25px;text-align:center;color:#cc1414;">大</div>
<div style="left:5px;top:554px;width:80px;height:25px;line-height:25px;text-align:center;color:#fff;">英冠</div>
<div style="left:86px;top:554px;width:75px;height:25px;line-height:25px;text-align:center;color:#222;">25-02-19</div>
<div style="left:162px;top:554px;width:110px;height:25px;line-height:25px;text-align:center;color:#1e7e1e;">普雷斯顿</div>
<div style="left:273px;top:554px;width:89px;height:25px;line-height:25px;text-align:center;color:#222;"><span style="color:#cc1414">1-1</span>(0-1)</div>
<div style="left:363px;top:554px;width:38px;height:25px;line-height:25px;text-align:center;color:#222;">7-4</div>
<div style="left:402px;top:554px;width:111px;height:25px;line-height:25px;text-align:center;color:#222;">米尔沃尔</div>
<div style="left:514px;top:554px;width:47px;height:25px;line-height:25px;text-align:center;color:#222;">1.06</div>
<div style="left:562px;top:554px;width:83px;height:25px;line-height:25px;text-align:center;color:#222;">平/半</div>
<div style="left:646px;top:554px;width:51px;height:25px;line-height:25px;text-align:center;color:#222;">0.83</div>
<div style="left:698px;top:554px;width:65px;height:25px;line-height:25px;text-align:center;color:#222;">2.43</div>
<div style="left:764px;top:554px;width:65px;height:25px;line-height:25px;text-align:center;color:#222;">2.81</div>
<div style="left:830px;top:554px;width:67px;height:25px;line-height:25px;text-align:center;color:#222;">3.35</div>
<div style="left:898px;top:554px;width:37px;height:25px;line-height:25px;text-align:center;color:#1e7e1e;">平</div>
<div style="left:936px;top:554px;width:37px;height:25px;line-height:25px;text-align:center;color:#1818c0;">输</div>
<div style="left:974px;top:554px;width:57px;height:25px;line-height:25px;text-align:center;color:#cc1414;">大</div>
<div style="left:5px;top:580px;width:80px;height:25px;line-height:25px;text-align:center;color:#fff;">英冠</div>
<div style="left:86px;top:580px;width:75px;height:25px;line-height:25px;text-align:center;color:#222;">25-02-15</div>
<div style="left:162px;top:580px;width:110px;height:25px;line-height:25px;text-align:center;color:#1e7e1e;">普雷斯顿</div>
<div style="left:273px;top:580px;width:89px;height:25px;line-height:25px;text-align:center;color:#222;"><span style="color:#cc1414">0-0</span>(0-0)</div>
<div style="left:363px;top:580px;width:38px;height:25px;line-height:25px;text-align:center;color:#222;">2-6</div>
<div style="left:402px;top:580px;width:111px;height:25px;line-height:25px;text-align:center;color:#222;">伯恩利</div>
<div style="left:514px;top:580px;width:47px;height:25px;line-height:25px;text-align:center;color:#222;">1.08</div>
<div style="left:562px;top:580px;width:83px;height:25px;line-height:25px;text-align:center;color:#222;">受平/半</div>
<div style="left:646px;top:580px;width:51px;height:25px;line-height:25px;text-align:center;color:#222;">0.81</div>
<div style="left:698px;top:580px;width:65px;height:25px;line-height:25px;text-align:center;color:#222;">4.07</div>
<div style="left:764px;top:580px;width:65px;height:25px;line-height:25px;text-align:center;color:#222;">3.00</div>
<div style="left:830px;top:580px;width:67px;height:25px;line-height:25px;text-align:center;color:#222;">2.05</div>
<div style="left:898px;top:580px;width:37px;height:25px;line-height:25px;text-align:center;color:#1e7e1e;">平</div>
<div style="left:936px;top:580px;width:37px;height:25px;line-height:25px;text-align:center;color:#cc1414;">赢</div>
<div style="left:974px;top:580px;width:57px;height:25px;line-height:25px;text-align:center;color:#1818c0;">小</div>
<div style="left:5px;top:606px;width:80px;height:25px;line-height:25px;text-align:center;color:#fff;">英冠</div>
<div style="left:86px;top:606px;width:75px;height:25px;line-height:25px;text-align:center;color:#222;">25-02-12</div>
<div style="left:162px;top:606px;width:110px;height:25px;line-height:25px;text-align:center;color:#222;">诺维奇</div>
<div style="left:273px;top:606px;width:89px;height:25px;line-height:25px;text-align:center;color:#222;"><span style="color:#cc1414">0-1</span>(0-1)</div>
<div style="left:363px;top:606px;width:38px;height:25px;line-height:25px;text-align:center;color:#222;">8-3</div>
<div style="left:402px;top:606px;width:111px;height:25px;line-height:25px;text-align:center;color:#1e7e1e;">普雷斯顿</div>
<div style="left:514px;top:606px;width:47px;height:25px;line-height:25px;text-align:center;color:#222;">0.98</div>
<div style="left:562px;top:606px;width:83px;height:25px;line-height:25px;text-align:center;color:#222;">半/一</div>
<div style="left:646px;top:606px;width:51px;height:25px;line-height:25px;text-align:center;color:#222;">0.91</div>
<div style="left:698px;top:606px;width:65px;height:25px;line-height:25px;text-align:center;color:#222;">1.71</div>
<div style="left:764px;top:606px;width:65px;height:25px;line-height:25px;text-align:center;color:#222;">3.65</div>
<div style="left:830px;top:606px;width:67px;height:25px;line-height:25px;text-align:center;color:#222;">4.84</div>
<div style="left:898px;top:606px;width:37px;height:25px;line-height:25px;text-align:center;color:#cc1414;">胜</div>
<div style="left:936px;top:606px;width:37px;height:25px;line-height:25px;text-align:center;color:#cc1414;">赢</div>
<div style="left:974px;top:606px;width:57px;height:25px;line-height:25px;text-align:center;color:#1818c0;">小</div>
<div style="left:5px;top:632px;width:80px;height:25px;line-height:25px;text-align:center;color:#fff;">英足总杯</div>
<div style="left:86px;top:632px;width:75px;height:25px;line-height:25px;text-align:center;color:#222;">25-02-08</div>
<div style="left:162px;top:632px;width:110px;height:25px;line-height:25px;text-align:center;color:#1e7e1e;">普雷斯顿</div>
<div style="left:273px;top:632px;width:89px;height:25px;line-height:25px;text-align:center;color:#222;"><span style="color:#cc1414">0-0</span>(0-0)</div>
<div style="left:363px;top:632px;width:38px;height:25px;line-height:25px;text-align:center;color:#222;">3-4</div>
<div style="left:402px;top:632px;width:111px;height:25px;line-height:25px;text-align:center;color:#222;">韦康比流浪者</div>
<div style="left:514px;top:632px;width:47px;height:25px;line-height:25px;text-align:center;color:#222;">1.08</div>
<div style="left:562px;top:632px;width:83px;height:25px;line-height:25px;text-align:center;color:#222;">半球</div>
<div style="left:646px;top:632px;width:51px;height:25px;line-height:25px;text-align:center;color:#222;">0.81</div>
<div style="left:698px;top:632px;width:65px;height:25px;line-height:25px;text-align:center;color:#222;">2.06</div>
<div style="left:764px;top:632px;width:65px;height:25px;line-height:25px;text-align:center;color:#222;">3.30</div>
<div style="left:830px;top:632px;width:67px;height:25px;line-height:25px;text-align:center;color:#222;">3.65</div>
<div style="left:898px;top:632px;width:37px;height:25px;line-height:25px;text-align:center;color:#1e7e1e;">平</div>
<div style="left:936px;top:632px;width:37px;height:25px;line-height:25px;text-align:center;color:#1818c0;">输</div>
<div style="left:974px;top:632px;width:57px;height:25px;line-height:25px;text-align:center;color:#1818c0;">小</div>
<div style="left:5px;top:658px;width:80px;height:25px;line-height:25px;text-align:center;color:#fff;">英冠</div>
<div style="left:86px;top:658px;width:75px;height:25px;line-height:25px;text-align:center;color:#222;">25-02-01</div>
<div style="left:162px;top:658px;width:110px;height:25px;line-height:25px;text-align:center;color:#222;">布莱克本</div>
<div style="left:273px;top:658px;width:89px;height:25px;line-height:25px;text-align:center;color:#222;"><span style="color:#cc1414">2-1</span>(1-0)</div>
<div style="left:363px;top:658px;width:38px;height:25px;line-height:25px;text-align:center;color:#222;">7-3</div>
<div style="left:402px;top:658px;width:111px;height:25px;line-height:25px;text-align:center;color:#1e7e1e;">普雷斯顿</div>
<div style="left:514px;top:658px;width:47px;height:25px;line-height:25px;text-align:center;color:#222;">0.88</div>
<div style="left:562px;top:658px;width:83px;height:25px;line-height:25px;text-align:center;color:#222;">平/半</div>
<div style="left:646px;top:658px;width:51px;height:25px;line-height:25px;text-align:center;color:#222;">1.01</div>
<div style="left:698px;top:658px;width:65px;height:25px;line-height:25px;text-align:center;color:#222;">2.16</div>
<div style="left:764px;top:658px;width:65px;height:25px;line-height:25px;text-align:center;color:#222;">3.10</div>
<div style="left:830px;top:658px;width:67px;height:25px;line-height:25px;text-align:center;color:#222;">3.55</div>
<div style="left:898px;top:658px;width:37px;height:25px;line-height:25px;text-align:center;color:#1818c0;">负</div>
<div style="left:936px;top:658px;width:37px;height:25px;line-height:25px;text-align:center;color:#1818c0;">输</div>
<div style="left:974px;top:658px;width:57px;height:25px;line-height:25px;text-align:center;color:#cc1414;">大</div>
<div style="left:5px;top:684px;width:80px;height:25px;line-height:25px;text-align:center;color:#fff;">英冠</div>
<div style="left:86px;top:684px;width:75px;height:25px;line-height:25px;text-align:center;color:#222;">25-01-25</div>
<div style="left:162px;top:684px;width:110px;height:25px;line-height:25px;text-align:center;color:#1e7e1e;">普雷斯顿</div>
<div style="left:273px;top:684px;width:89px;height:25px;line-height:25px;text-align:center;color:#222;"><span style="color:#cc1414">2-1</span>(1-0)</div>
<div style="left:363px;top:684px;width:38px;height:25px;line-height:25px;text-align:center;color:#222;">6-4</div>
<div style="left:402px;top:684px;width:111px;height:25px;line-height:25px;text-align:center;color:#222;">米德尔斯堡</div>
<div style="left:514px;top:684px;width:47px;height:25px;line-height:25px;text-align:center;color:#222;">1.05</div>
<div style="left:562px;top:684px;width:83px;height:25px;line-height:25px;text-align:center;color:#222;">受平/半</div>
<div style="left:646px;top:684px;width:51px;height:25px;line-height:25px;text-align:center;color:#222;">0.84</div>
<div style="left:698px;top:684px;width:65px;height:25px;line-height:25px;text-align:center;color:#222;">3.33</div>
<div style="left:764px;top:684px;width:65px;height:25px;line-height:25px;text-align:center;color:#222;">3.30</div>
<div style="left:830px;top:684px;width:67px;height:25px;line-height:25px;text-align:center;color:#222;">2.15</div>
<div style="left:898px;top:684px;width:37px;height:25px;line-height:25px;text-align:center;color:#cc1414;">胜</div>
<div style="left:936px;top:684px;width:37px;height:25px;line-height:25px;text-align:center;color:#cc1414;">赢</div>
<div style="left:974px;top:684px;width:57px;height:25px;line-height:25px;text-align:center;color:#cc1414;">大</div>
<div style="left:5px;top:710px;width:1026px;height:25px;line-height:25px;text-align:center;color:#222;letter-spacing:0.25px">近<span style="color:#cc1414">10</span>场,胜3平4负3, 胜率:<span style="color:#cc1414">30%</span> 让胜率:<span style="color:#cc1414">40%</span> 大率:<span style="color:#cc1414">50%</span> 单率:<span style="color:#cc1414">60%</span></div>
<div style="left:439px;top:36px;height:25px;line-height:25px;white-space:nowrap">近</div>
<select class="n" style="left:455px;top:39px;width:38px;height:17px"><option>10</option></select>
<div style="left:497px;top:36px;height:25px;line-height:25px">场</div>
<input type="checkbox" style="left:513px;top:39px">
<div style="left:530px;top:36px;height:25px;line-height:25px">同主</div>
<input type="checkbox" checked style="left:554px;top:39px">
<div style="left:567px;top:36px;height:25px;line-height:25px">英冠</div>
<input type="checkbox" checked style="left:591px;top:39px">
<div style="left:604px;top:36px;height:25px;line-height:25px;white-space:nowrap">英足总杯</div>
<div style="left:419px;top:387px;height:25px;line-height:25px">近</div>
<select class="n" style="left:435px;top:390px;width:38px;height:17px"><option>10</option></select>
<div style="left:477px;top:387px;height:25px;line-height:25px">场</div>
<input type="checkbox" style="left:493px;top:390px">
<div style="left:509px;top:387px;height:25px;line-height:25px">同客</div>
<input type="checkbox" checked style="left:537px;top:390px">
<div style="left:549px;top:387px;height:25px;line-height:25px">英冠</div>
<input type="checkbox" checked style="left:574px;top:390px">
<div style="left:587px;top:387px;height:25px;line-height:25px;white-space:nowrap">英足总杯</div>
<input type="checkbox" checked style="left:635px;top:390px">
<div style="left:648px;top:387px;height:25px;line-height:25px;white-space:nowrap">英联杯</div>
</body></html>
